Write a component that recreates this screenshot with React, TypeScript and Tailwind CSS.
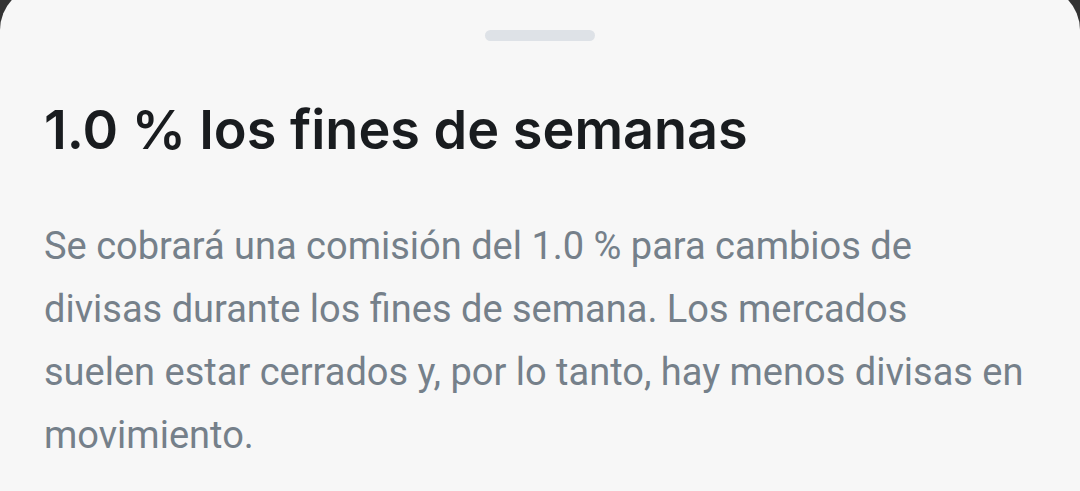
export default function App() {
  return (
    <div className="flex min-h-screen flex-col overflow-hidden bg-[#333333] font-['Roboto',sans-serif]">
      <section
        aria-labelledby="sheet-title"
        className="-mt-3.5 flex grow flex-col rounded-t-[44px] bg-[#f7f7f7] px-11 pt-11 pb-6"
      >
        <div className="h-[11px] w-[110px] self-center rounded-full bg-[#dee2e7]" />
        <h1
          id="sheet-title"
          className="mt-[53px] font-['Inter','Roboto',sans-serif] text-[54px] leading-[72px] font-semibold text-[#191c1f]"
        >
          1.0 % los fines de semanas
        </h1>
        <p className="mt-[49px] text-[38px] leading-[63px] text-[#75808a]">
          Se cobrará una comisión del 1.0 % para cambios de divisas durante los
          fines de semana. Los mercados
          <br /> suelen estar cerrados y, por lo tanto, hay menos divisas en
          movimiento.
        </p>
      </section>
    </div>
  );
}
